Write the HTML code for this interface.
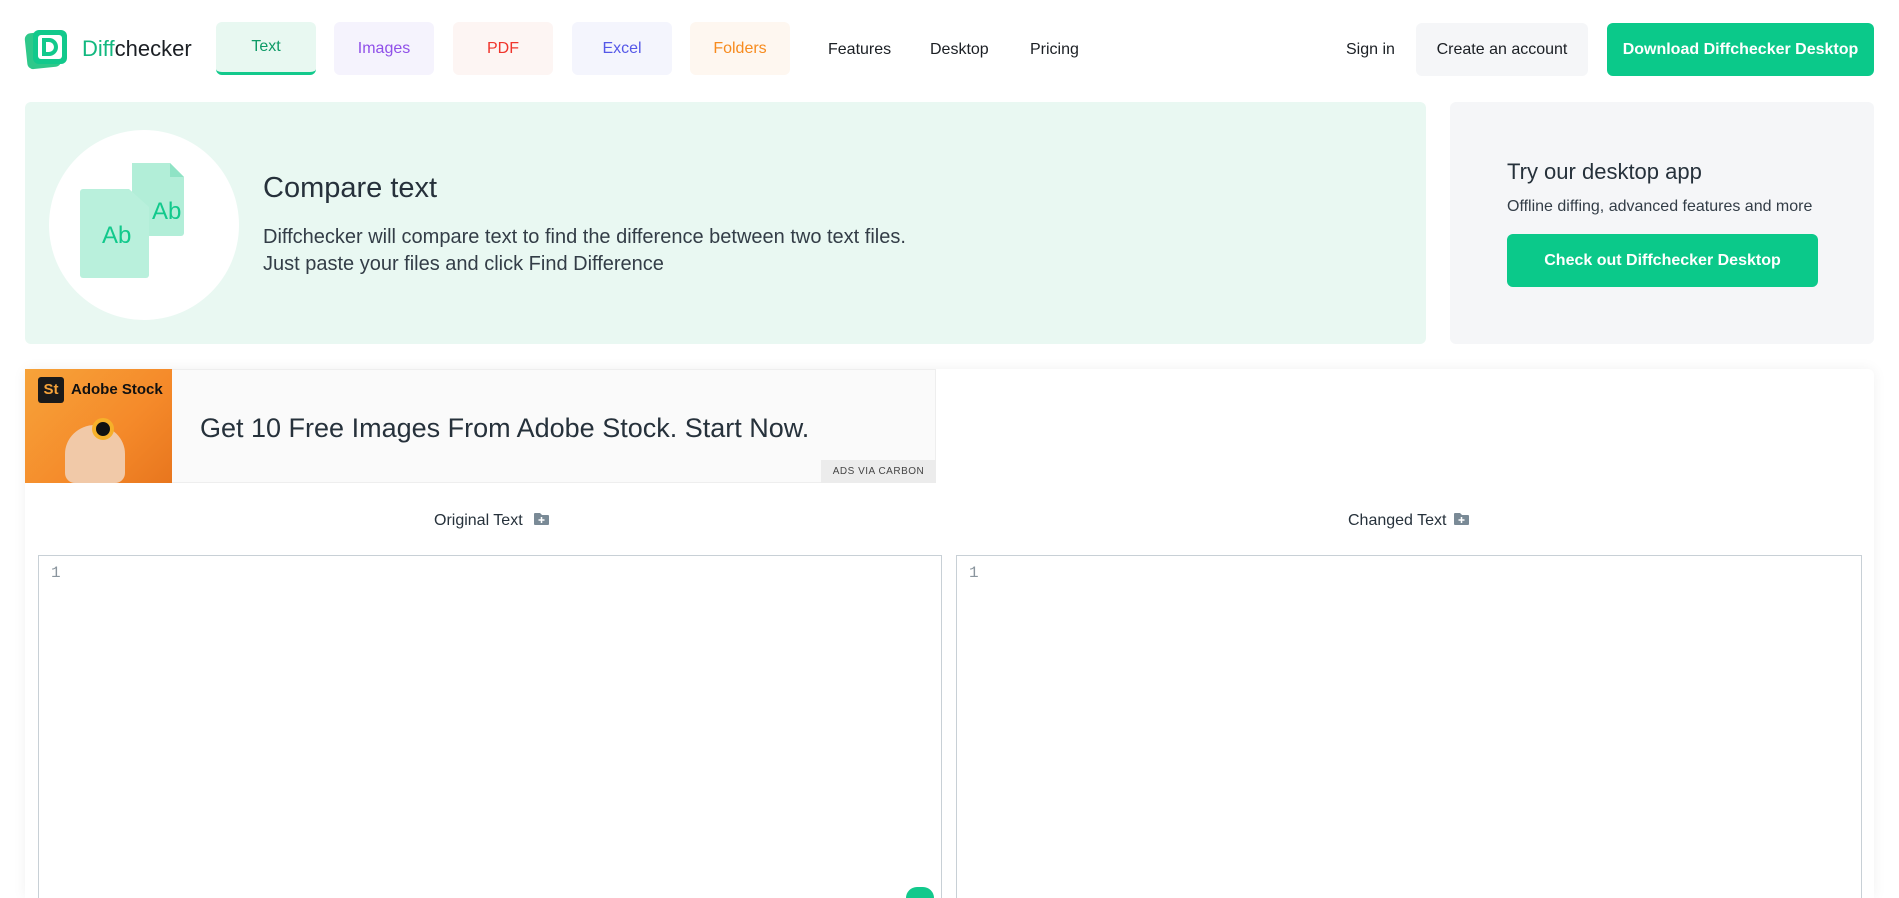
<!DOCTYPE html>
<html style="width:1899px;height:898px;overflow:hidden"><head><meta charset="utf-8"><style>
*{box-sizing:border-box;margin:0;padding:0}
body{width:1899px;height:898px;overflow:hidden;background:#fff;font-family:"Liberation Sans",sans-serif;color:#212b36;position:relative}
.a{position:absolute}
.tab{position:absolute;top:22px;width:100px;height:53px;border-radius:6px;font-size:16px;display:flex;align-items:center;justify-content:center}
.nav{position:absolute;top:41px;font-size:16px;color:#1b1f24}
.btn{position:absolute;border-radius:6px;display:flex;align-items:center;justify-content:center;font-size:16px}
</style></head><body>
<svg class="a" style="left:24px;top:27px" width="46" height="44" viewBox="0 0 46 44">
<rect x="2" y="5" width="34" height="36" rx="6" fill="#2fc88a" transform="rotate(-6 19 23)"/>
<rect x="9" y="3" width="34" height="34" rx="6" fill="#12c98c"/>
<rect x="14" y="8" width="24" height="24" rx="3" fill="#fff"/>
<path d="M20 13h5a7 7 0 0 1 0 14h-5z" fill="none" stroke="#12c98c" stroke-width="4"/>
</svg>
<div class="a" style="left:82px;top:36px;font-size:22px;line-height:26px"><span style="color:#12b87f">Diff</span><span style="color:#1b1f24">checker</span></div>
<div class="tab" style="left:216px;background:#e8f8f1;color:#0d9a66;border-bottom:3px solid #12c98c">Text</div>
<div class="tab" style="left:334px;background:#f5f3fd;color:#9050e9">Images</div>
<div class="tab" style="left:453px;background:#fdf5f3;color:#f0352c">PDF</div>
<div class="tab" style="left:572px;background:#f4f5fd;color:#5558e8">Excel</div>
<div class="tab" style="left:690px;background:#fef7f0;color:#f78b1e">Folders</div>
<div class="nav" style="left:828px">Features</div>
<div class="nav" style="left:930px">Desktop</div>
<div class="nav" style="left:1030px">Pricing</div>
<div class="nav" style="left:1346px">Sign in</div>
<div class="btn" style="left:1416px;top:23px;width:172px;height:53px;background:#f5f6f8;color:#1b1f24">Create an account</div>
<div class="btn" style="left:1607px;top:23px;width:267px;height:53px;background:#0bc98a;color:#fff;font-weight:bold">Download Diffchecker Desktop</div>

<div class="a" style="left:25px;top:102px;width:1401px;height:242px;background:#e9f8f2;border-radius:6px"></div>
<div class="a" style="left:49px;top:130px;width:190px;height:190px;border-radius:50%;background:#fff"></div>
<svg class="a" style="left:80px;top:163px" width="126" height="115" viewBox="0 0 126 115">
<path d="M52 0h38l14 14v56a3 3 0 0 1-3 3H52z" fill="#b2eed8"/>
<path d="M90 0l14 14H90z" fill="#8fe3c5"/>
<path d="M3 26h46l20 18v68a3 3 0 0 1-3 3H3a3 3 0 0 1-3-3V29a3 3 0 0 1 3-3z" fill="#b9f0dc"/>
<text x="72" y="56" font-family="Liberation Sans" font-size="24" fill="#12c98c">Ab</text>
<text x="22" y="80" font-family="Liberation Sans" font-size="24" fill="#12c98c">Ab</text>
</svg>
<div class="a" style="left:263px;top:172px;font-size:29px;color:#26313b">Compare text</div>
<div class="a" style="left:263px;top:224px;font-size:20px;line-height:27px;color:#333d47">Diffchecker will compare text to find the difference between two text files.<br>Just paste your files and click Find Difference</div>

<div class="a" style="left:1450px;top:102px;width:424px;height:242px;background:#f5f6f8;border-radius:6px"></div>
<div class="a" style="left:1507px;top:159px;font-size:22px;color:#26313b">Try our desktop app</div>
<div class="a" style="left:1507px;top:198px;font-size:16px;color:#333d47">Offline diffing, advanced features and more</div>
<div class="btn" style="left:1507px;top:234px;width:311px;height:53px;background:#0bc98a;color:#fff;font-weight:bold">Check out Diffchecker Desktop</div>

<div class="a" style="left:25px;top:369px;width:1849px;height:529px;background:#fff;border-radius:6px 6px 0 0;box-shadow:0 0 14px rgba(0,0,0,.06)"></div>
<div class="a" style="left:25px;top:369px;width:911px;height:114px;background:#fafafa;border:1px solid #eee"></div>
<div class="a" style="left:25px;top:369px;width:147px;height:114px;background:linear-gradient(135deg,#f6a33a,#f58a2a 60%,#e8761e);overflow:hidden"></div>
<div class="a" style="left:65px;top:425px;width:60px;height:58px;border-radius:50% 50% 10px 10px;background:#f1c9a8"></div>
<div class="a" style="left:92px;top:418px;width:22px;height:22px;border-radius:50%;background:#111;border:4px solid #f6b02a"></div>
<div class="a" style="left:38px;top:377px;width:26px;height:26px;background:#1a1a1a;border-radius:3px;color:#f6a33a;font-weight:bold;font-size:15px;text-align:center;line-height:26px">St</div>
<div class="a" style="left:71px;top:381px;font-size:15px;font-weight:bold;color:#111">Adobe Stock</div>
<div class="a" style="left:200px;top:413px;font-size:27px;color:#26313b">Get 10 Free Images From Adobe Stock. Start Now.</div>
<div class="a" style="left:821px;top:460px;width:115px;height:23px;background:#ececec;font-size:10px;letter-spacing:.5px;color:#444;text-align:center;line-height:23px">ADS VIA CARBON</div>

<div class="a" style="left:434px;top:512px;font-size:16px;color:#26313b">Original Text</div>
<svg class="a" style="left:533px;top:512px" width="17" height="14" viewBox="0 0 17 14"><path d="M1 2a1 1 0 0 1 1-1h5l2 2h6a1 1 0 0 1 1 1v8a1 1 0 0 1-1 1H2a1 1 0 0 1-1-1z" fill="#7a8a96"/><path d="M8.5 5v6M5.5 8h6" stroke="#fff" stroke-width="1.5"/></svg>
<div class="a" style="left:1348px;top:512px;font-size:16px;color:#26313b">Changed Text</div>
<svg class="a" style="left:1453px;top:512px" width="17" height="14" viewBox="0 0 17 14"><path d="M1 2a1 1 0 0 1 1-1h5l2 2h6a1 1 0 0 1 1 1v8a1 1 0 0 1-1 1H2a1 1 0 0 1-1-1z" fill="#7a8a96"/><path d="M8.5 5v6M5.5 8h6" stroke="#fff" stroke-width="1.5"/></svg>

<div class="a" style="left:38px;top:555px;width:904px;height:343px;border:1px solid #c8d0d6;border-bottom:none"></div>
<div class="a" style="left:956px;top:555px;width:906px;height:343px;border:1px solid #c8d0d6;border-bottom:none"></div>
<div class="a" style="left:51px;top:564px;font-family:'Liberation Mono',monospace;font-size:16px;color:#8a959e">1</div>
<div class="a" style="left:969px;top:564px;font-family:'Liberation Mono',monospace;font-size:16px;color:#8a959e">1</div>
<div class="a" style="left:906px;top:887px;width:28px;height:11px;border-radius:14px 14px 0 0;background:#12c98c"></div>
</body></html>
